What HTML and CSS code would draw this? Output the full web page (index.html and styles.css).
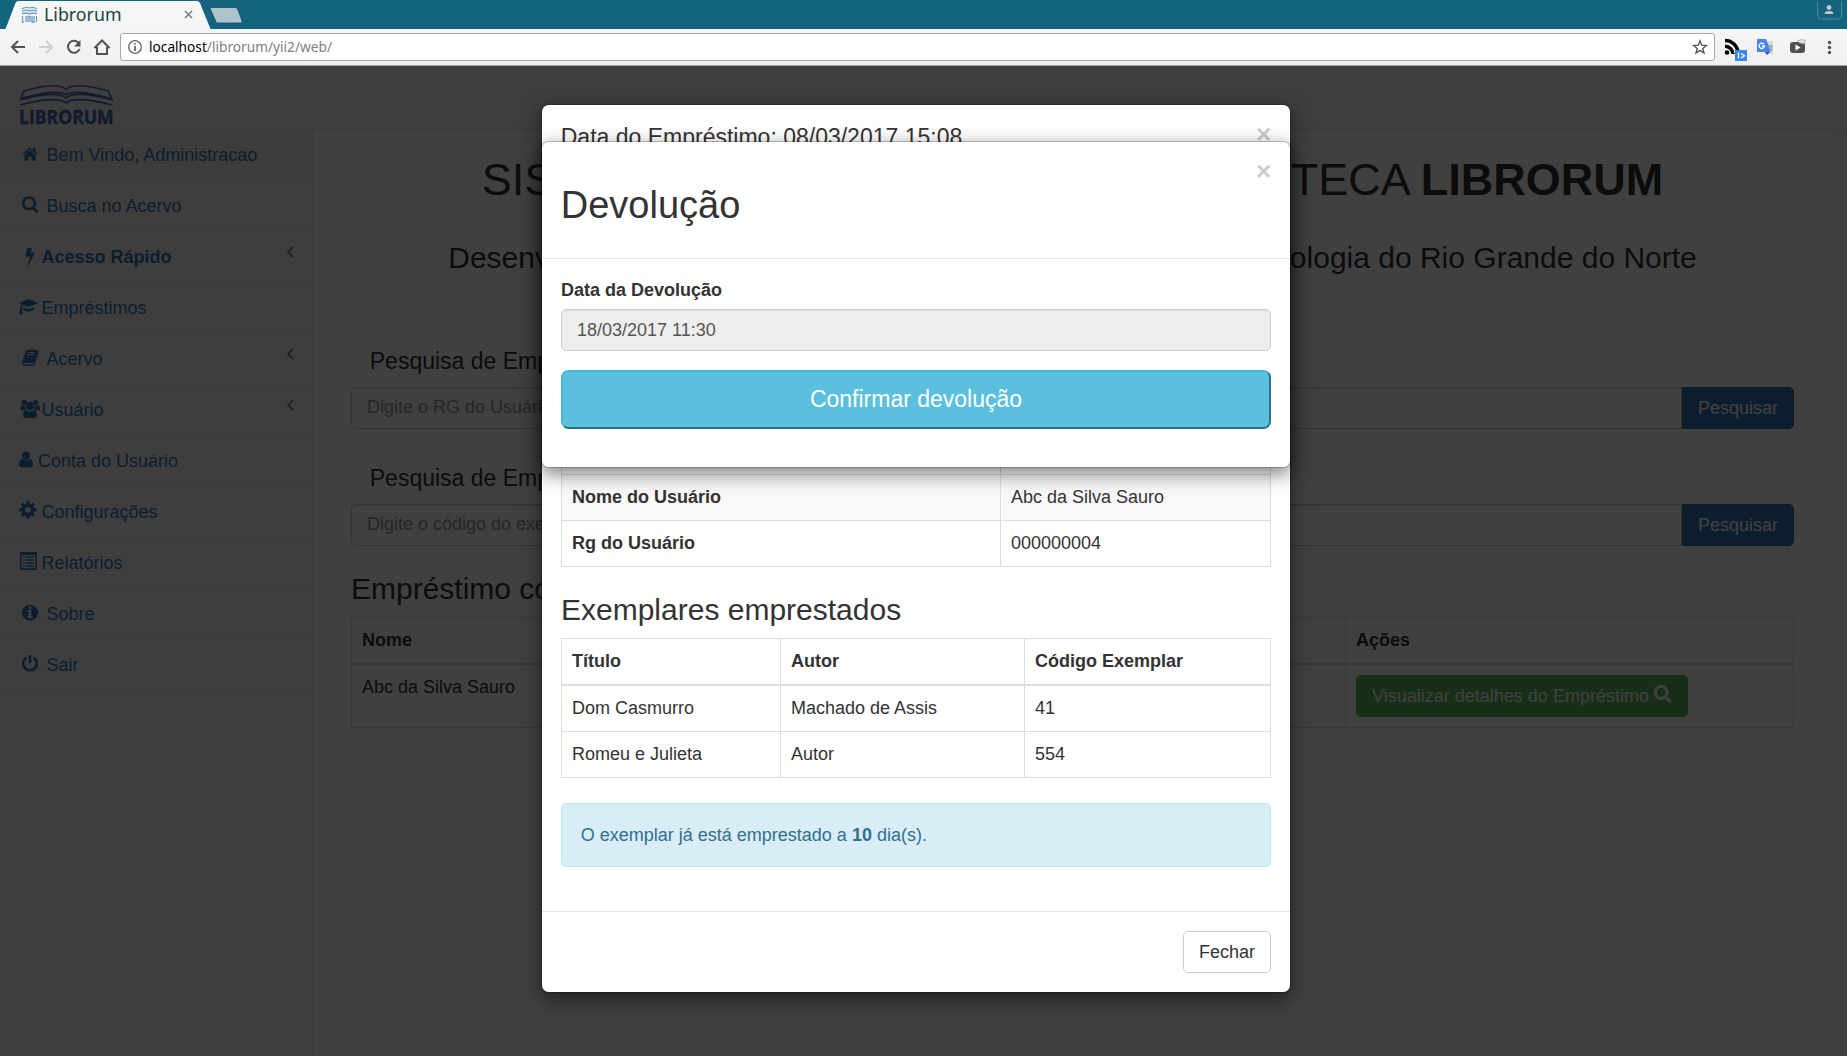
FILE: index.html
```html
<!DOCTYPE html>
<html lang="pt-BR">
<head>
<meta charset="utf-8">
<title>Librorum</title>
<link rel="stylesheet" href="styles.css">
</head>
<body>
<div class="browser">
  <div class="tabbar">
    <svg class="tab-shape" viewBox="0 0 250 29" width="250" height="29">
      <path d="M5.500 29L15.500 3Q16.500 1 18.500 1H197Q199 1 200 3L210.500 29Z" fill="#f6f6f6"/>
      <path d="M211.500 7.500H235Q237 7.500 237.700 9L242 21Q242.500 23 241 23H218Q216.500 23 215.800 21.500L210.300 9Q210 7.500 211.500 7.500Z" fill="#aec3cb" stroke="#0f4d63" stroke-width=".8"/>
    </svg>
    <div class="tab">
      <svg width="17" height="17" viewBox="0 0 17 17" fill="none" stroke="#6b9cc9" stroke-width="1.300"><path d="M1 3Q5 .500 8.500 2Q12 .500 16 3M1 5.500Q5 3 8.500 5Q12 3 16 5.500M1 8Q5 6 8.500 8Q12 6 16 8M1.500 10V16H3M5 10V16M7 16V10.500H9V16M11 10V16H13V10M15.500 10V16"/></svg>
      <span class="tab-title">Librorum</span>
      <svg class="tab-close" width="9" height="9" viewBox="0 0 9 9" stroke="#6f837f" stroke-width="1.600"><path d="M1 1L8 8M8 1L1 8"/></svg>
    </div>
    <div class="profile"><svg width="26" height="21" viewBox="0 0 26 21"><path d="M.500 2V15Q.500 19 4 19H21Q24.500 19 24.500 15V2" fill="none" stroke="#4c8ba0"/><circle cx="12" cy="7.500" r="2.900" fill="#b9ced6" stroke="#0c475c" stroke-width=".8"/><path d="M7 14.500Q7 10.500 12 10.500Q17 10.500 17 14.500Z" fill="#b9ced6" stroke="#0c475c" stroke-width=".8"/></svg></div>
  </div>
  <div class="toolbar">
    <svg class="nav" width="120" height="36" viewBox="0 0 120 36" fill="none" stroke="#4f5350" stroke-width="2">
      <path d="M25 18H12.500M18 12L12 18L18 24"/>
      <path d="M39 18H51.500M46 12L52 18L46 24" stroke="#cfcfcf"/>
      <path d="M79 14.500A6 6 0 1 0 79.600 20"/><path d="M80.500 11V17.500H74Z" fill="#4f5350" stroke="none"/>
      <path d="M94.500 19L102 11.500L109.500 19M97 18V25H107V18"/>
    </svg>
    <div class="url">
      <svg width="14" height="14" viewBox="0 0 14 14" fill="none" stroke="#5f6368"><circle cx="7" cy="7" r="6.300" stroke-width="1.300"/><path d="M7 3V4.600M7 6V11" stroke-width="1.700"/></svg>
      <span class="url-text"><b>localhost</b>/librorum/yii2/web/</span>
      <svg class="star" width="16" height="16" viewBox="0 0 16 16" fill="none" stroke="#555" stroke-width="1.400"><path d="M8 1.800L9.800 6.200L14.300 6.500L10.800 9.500L12 14L8 11.400L4 14L5.200 9.500L1.700 6.500L6.200 6.200Z"/></svg>
    </div>
    <svg class="ext" width="132" height="36" viewBox="0 0 132 36">
      <g fill="none" stroke="#000" stroke-width="3.400"><path d="M10 11.500A13 13 0 0 1 23 24.500M10 17.300A8 8 0 0 1 18 25"/></g><circle cx="12" cy="23.500" r="2.300"/>
      <rect x="20" y="21" width="12" height="11" fill="#3f86f5"/><path d="M23.500 23.500V29.500M26 24.500L29.500 26.700L26 29" fill="none" stroke="#fff" stroke-width="1.300"/>
      <rect x="49" y="12" width="9" height="13" fill="#d9d9d9"/><path d="M42 10H51L56 23H42Z" fill="#4785ec"/><path d="M50 23H55L52 26Z" fill="#2a4fb5"/><path d="M49 15.200A2.700 2.700 0 1 0 49.500 17H47" fill="none" stroke="#fff" stroke-width="1.300"/><path d="M53 17H57.500M55 16Q56.500 20 57.500 22M57 18Q55.500 21 54 22" stroke="#7a9a9a" fill="none"/>
      <rect x="75" y="13" width="15" height="11" rx="3" fill="#505050"/><path d="M80.500 15.500V21.500L85.500 18.500Z" fill="#fff"/><path d="M82 12L86 10.500L90.500 11L89 15L85 14Z" fill="#ddd" stroke="#999" stroke-width=".5"/>
      <g fill="#505050"><circle cx="114.500" cy="13.500" r="1.700"/><circle cx="114.500" cy="18.500" r="1.700"/><circle cx="114.500" cy="23.500" r="1.700"/></g>
    </svg>
  </div>
</div>

<div class="page">
  <header class="navbar">
    <svg class="logo" width="96" height="44" viewBox="0 0 288 132">
      <g fill="none" stroke="#4a68b4" stroke-width="5"><path d="M8 47L17 21Q120 -8 144 16Q168 -8 271 21L282 47Q170 18 144 42Q118 18 8 47ZM14 42Q118 14 144 32Q170 14 274 42"/><path d="M6 63Q118 34 144 57Q170 34 282 63"/></g>
      <text x="3" y="120" textLength="284" lengthAdjust="spacingAndGlyphs" class="logo-text">LIBRORUM</text>
    </svg>
  </header>
  <div class="layout">
    <nav class="sidebar">
      <a class="item active"><svg class="ico wide" viewBox="54 0 84 150"><path d="M66 72L90 52L98 59V53H107V66L114 72L111 75L90 57L69 75ZM73 75L90 61L107 75V92H95V80H85V92H73Z"/></svg>Bem Vindo, Administracao</a>
      <a class="item"><svg class="ico wide" viewBox="54 0 84 150"><circle cx="87" cy="67" r="17.500" class="line"/><path class="line" d="M99 80L113 94"/></svg>Busca no Acervo</a>
      <a class="item strong"><svg class="ico mid" viewBox="54 0 72 150"><path d="M82 48H97L91 64L105 61L86 99H83L90 72L76 76Z"/></svg>Acesso Rápido<svg class="chev" viewBox="0 0 7 12"><path d="M6 1L1 6L6 11"/></svg></a>
      <a class="item"><svg class="ico mid" viewBox="54 0 72 150"><path d="M85 48L115 60L86 72L69 66Q65 69 65 75Q69 78 66 82L69 94H56L60 82Q57 78 61 75Q61 68 64 64L57 60ZM69 73L86 79L103 72V79Q96 86 86 86Q76 86 69 80Z"/></svg>Empréstimos</a>
      <a class="item"><svg class="ico wide" viewBox="54 0 84 150"><path fill-rule="evenodd" d="M83 47H111Q117 51 116 57L105 91Q103 95 98 95H72Q65 94 65 87L77 52Q79 48 83 47ZM85 54L84 57H104L105 54ZM82 61L81 64H101L102 61ZM70 86Q68 91 73 91H98Q101 91 102 88L112 56Q113 54 112 53L102 85Q101 87 98 87Z"/></svg>Acervo<svg class="chev" viewBox="0 0 7 12"><path d="M6 1L1 6L6 11"/></svg></a>
      <a class="item"><svg class="ico mid" viewBox="54 0 72 150"><circle cx="73" cy="52" r="8"/><circle cx="107" cy="52" r="8"/><circle cx="90" cy="63" r="13"/><path d="M61 74V66Q61 60 67 60Q72 63 75 62Q75 70 79 76H68Q61 77 61 74ZM120 74V66Q120 60 114 60Q109 63 105 62Q105 70 101 76H113Q120 77 120 74ZM69 91Q69 77 79 76Q90 84 101 76Q111 77 111 91Q111 99 103 99H77Q69 99 69 91Z"/></svg>Usuário<svg class="chev" viewBox="0 0 7 12"><path d="M6 1L1 6L6 11"/></svg></a>
      <a class="item"><svg class="ico slim" viewBox="54 0 60 150"><circle cx="78" cy="59" r="12"/><path d="M57 86Q57 70 67 69Q78 78 89 69Q99 70 99 86Q99 94 91 94H65Q57 94 57 86Z"/></svg>Conta do Usuário</a>
      <a class="item"><svg class="ico mid" viewBox="54 0 72 150"><circle cx="83.500" cy="68.500" r="14" class="line gear"/><path class="teeth" d="M83.500 42V51M83.500 86V95M57 68.500H66M101 68.500H110M65 50L71 56M102 50L96 56M65 87L71 81M102 87L96 81"/></svg>Configurações</a>
      <a class="item"><svg class="ico mid" viewBox="54 0 72 150"><path fill-rule="evenodd" d="M60 42H111V96H60ZM65 51V91H106V51Z"/><path d="M69 55H74V59H69ZM77 55H102V59H77ZM69 64H74V68H69ZM77 64H102V68H77ZM69 73H74V77H69ZM77 73H102V77H77ZM69 82H74V86H69ZM77 82H102V86H77Z"/></svg>Relatórios</a>
      <a class="item"><svg class="ico wide" viewBox="54 0 84 150"><path fill-rule="evenodd" d="M90 47A24 24 0 1 0 90 95A24 24 0 1 0 90 47ZM86 52H94V59H86ZM82 63H94V82H98V87H82V82H86V68H82Z"/></svg>Sobre</a>
      <a class="item"><svg class="ico wide" viewBox="54 0 84 150"><path class="line" d="M79 53A20.500 20.500 0 1 0 101 53M90 45V70"/></svg>Sair</a>
    </nav>
    <main class="content">
      <h1>SISTEMA DE <span class="spaced">AUTOMAÇÃO</span> DE BIBLIOTECA <b>LIBRORUM</b></h1>
      <h3 class="subtitle">Desenvolvido no Instituto Federal de Educação, Ciência e Tecnologia do Rio Grande do Norte</h3>
      <hr>
      <h4>Pesquisa de Empréstimos</h4>
      <div class="search"><div class="field">Digite o RG do Usuário</div><button class="btn primary">Pesquisar</button></div>
      <h4 class="second">Pesquisa de Empréstimos</h4>
      <div class="search"><div class="field">Digite o código do exemplar</div><button class="btn primary">Pesquisar</button></div>
      <h3 class="result">Empréstimo corrente</h3>
      <table class="table loans">
        <colgroup><col class="c-name"><col></colgroup>
        <thead><tr><th>Nome</th><th>Ações</th></tr></thead>
        <tbody><tr><td>Abc da Silva Sauro</td><td><button class="btn success">Visualizar detalhes do Empréstimo <svg width="18" height="22" viewBox="0 0 18 22" fill="none" stroke="#fff" stroke-width="3"><circle cx="7.300" cy="7.500" r="5.900"/><path d="M11.500 12L16.700 17.200"/></svg></button></td></tr></tbody>
      </table>
    </main>
  </div>

  <div class="backdrop"></div>

  <section class="modal details">
    <div class="modal-header"><h4>Data do Empréstimo: 08/03/2017 15:08</h4><span class="close">×</span></div>
    <div class="modal-body">
      <table class="table user">
        <colgroup><col class="c-label"><col></colgroup>
        <tbody>
          <tr><th></th><td></td></tr>
          <tr class="striped"><th>Nome do Usuário</th><td>Abc da Silva Sauro</td></tr>
          <tr><th>Rg do Usuário</th><td>000000004</td></tr>
        </tbody>
      </table>
      <h3>Exemplares emprestados</h3>
      <table class="table copies">
        <colgroup><col class="c-title"><col class="c-author"><col></colgroup>
        <thead><tr><th>Título</th><th>Autor</th><th>Código Exemplar</th></tr></thead>
        <tbody>
          <tr><td>Dom Casmurro</td><td>Machado de Assis</td><td>41</td></tr>
          <tr><td>Romeu e Julieta</td><td>Autor</td><td>554</td></tr>
        </tbody>
      </table>
      <div class="alert">O exemplar já está emprestado a <b>10</b> dia(s).</div>
    </div>
    <div class="modal-footer"><button class="btn default">Fechar</button></div>
  </section>

  <section class="modal return">
    <div class="modal-header"><h2>Devolução</h2><span class="close">×</span></div>
    <div class="modal-body">
      <label>Data da Devolução</label>
      <div class="field readonly">18/03/2017 11:30</div>
      <button class="confirm">Confirmar devolução</button>
    </div>
  </section>
</div>
</body>
</html>
```

FILE: styles.css
```css
* { box-sizing: border-box; }
body {
  margin: 0;
  width: 1847px;
  height: 1056px;
  overflow: hidden;
  font: 18px/25px "Liberation Sans", Arial, sans-serif;
  color: #333;
  background: #fff;
}
svg { display: block; flex: none; }

/* browser chrome */
.browser { font-family: "Noto Sans", sans-serif; }
.tabbar { position: relative; display: flex; justify-content: space-between; height: 29px; background: #14647f; }
.tab-shape { position: absolute; left: 0; top: 0; }
.tab { position: relative; display: flex; align-items: center; width: 215px; height: 29px; padding-left: 21px; }
.tab-title { margin-left: 6px; width: 134px; font-size: 17.800px; color: #1d4340; }
.tab-close { margin-left: 6px; }
.profile { padding-right: 4px; }
.toolbar { display: flex; height: 37px; background: linear-gradient(#f6f6f6, #efefef); border-bottom: 1px solid #a5a5a5; }
.url { flex: 1; display: flex; align-items: center; height: 28px; margin-top: 4px; padding-left: 7px; background: #fff; border: 1px solid #a9a9a9; border-radius: 3px; }
.url-text { flex: 1; margin-left: 7px; padding-bottom: 1px; font-size: 13.700px; color: #808080; }
.url-text b { font-weight: 400; color: #000; }
.star { margin-right: 6px; }

/* page */
.page { position: relative; height: 990px; background: #f8f8f8; overflow: hidden; }
.navbar { height: 64px; padding: 18px 0 0 18px; border-bottom: 1px solid #e7e7e7; background: #f8f8f8; }
.logo { overflow: visible; }
.logo-text { font: bold 60px "Open Sans", sans-serif; fill: #4a68b4; stroke: #4a68b4; stroke-width: 1.500; }
.layout { display: flex; height: 926px; }
.sidebar { width: 314px; border-right: 1px solid #e7e7e7; }
.item { display: flex; align-items: center; height: 51px; padding-left: 18px; border-bottom: 1px solid #e7e7e7; color: #337ab7; }
.active { background: #eee; }
.strong { font-weight: 700; }
.ico { height: 50px; margin-right: 0; fill: #337ab7; overflow: visible; }
.wide { width: 28px; margin-right: .500px; }
.mid { width: 24px; margin-right: -.500px; }
.slim { width: 20px; }
.line { fill: none; stroke: #337ab7; stroke-width: 8; }
.gear { stroke-width: 11; }
.teeth { stroke: #337ab7; stroke-width: 9; }
.chev { width: 7px; height: 12px; margin: 0 19px 10px auto; fill: none; stroke: #337ab7; stroke-width: 1.500; }
.content { width: 1518px; padding: 0 38px 0 37px; background: #fff; }
h1, h2, h3, h4 { margin: 0; font-weight: 400; line-height: 1.1; white-space: nowrap; }
h1 { margin-top: 25px; font-size: 45px; text-align: center; }
.spaced { letter-spacing: .500px; }
h2 { font-size: 38px; }
h3 { font-size: 30px; }
h4 { font-size: 23px; line-height: 25px; }
.subtitle { margin-top: 36px; text-align: center; }
hr { margin: 25.500px 0 0; border: 0; border-top: 1px solid #eee; }
.content h4 { margin: 49px 0 0 18.750px; }
.content h4.second { margin-top: 37px; }
.search { display: flex; margin-top: 13px; }
.field { flex: 1; height: 42px; padding: 7px 15px; color: #999; background: #fff; border: 1px solid #ccc; border-radius: 5px; box-shadow: inset 0 1px 1px rgba(0, 0, 0, .075); }
.search .field { border-radius: 5px 0 0 5px; }
.btn { display: flex; align-items: center; justify-content: center; gap: 5px; height: 42px; padding: 0 14px; border: 1px solid; border-radius: 5px; font: inherit; white-space: nowrap; }
.primary { width: 112px; color: #fff; background: #337ab7; border-color: #2e6da4; border-radius: 0 5px 5px 0; }
.success { width: 332px; color: #fff; background: #5cb85c; border-color: #4cae4c; }
.default { width: 88px; color: #333; background: #fff; border-color: #ccc; }
.content .result { margin-top: 26px; }
.table { width: 100%; border-collapse: collapse; table-layout: fixed; }
.table th, .table td { height: 46px; padding: 10px; border: 1px solid #ddd; text-align: left; vertical-align: top; }
.table thead th { border-bottom-width: 2px; }
.loans { margin-top: 12px; }
.c-name { width: 994px; }

.backdrop { position: absolute; inset: 0; background: rgba(0, 0, 0, .75); }

/* modals */
.modal { position: absolute; left: 541px; width: 750px; background: #fff; background-clip: padding-box; border: 1px solid rgba(0, 0, 0, .2); border-radius: 7.500px; box-shadow: 0 6px 19px rgba(0, 0, 0, .5); }
.details { top: 38px; height: 889px; }
.return { top: 75px; height: 327px; }
.modal-header { display: flex; justify-content: space-between; padding: 18.750px; }
.close { font-size: 26.250px; font-weight: 700; line-height: 1; opacity: .2; color: #000; text-shadow: 0 1px 0 #fff; margin-top: -2.500px; }
.return .modal-header { height: 117px; border-bottom: 1px solid #e5e5e5; }
.return h2 { margin-top: 24.500px; }
.modal-body { padding: 19px; }
.details .modal-header { height: 62px; }
.details h4 { line-height: 27px; }
.details .modal-body { height: 744px; padding-top: 261px; }
.c-label { width: 439px; }
.striped { background: #f9f9f9; }
.details h3 { margin: 26px 0 12px; }
.c-title { width: 219px; }
.c-author { width: 244px; }
.alert { margin-top: 25px; height: 64px; padding: 19px 18.750px; color: #31708f; background: #d9edf7; border: 1px solid #bce8f1; border-radius: 5px; }
.modal-footer { display: flex; justify-content: flex-end; padding: 19px; border-top: 1px solid #e5e5e5; }
label { display: block; margin-bottom: 6px; font-weight: 700; }
.readonly { padding-top: 8px; color: #555; background: #eee; border-color: #ccc; }
.confirm { display: block; width: 100%; height: 59px; margin-top: 19px; padding: 0 6px 1px; font: 23px/30px "Liberation Sans", Arial, sans-serif; color: #fff; background: #5bc0de; border: 2px outset #46b8da; border-radius: 7.500px; }
```
